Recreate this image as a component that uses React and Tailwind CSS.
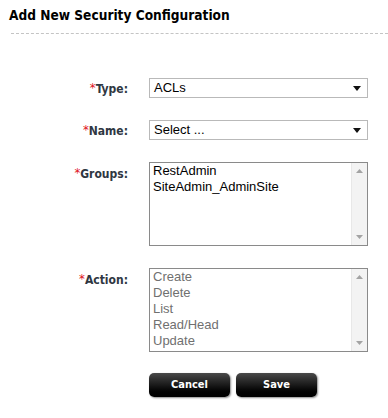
import React from 'react'

// Formulaire de configuration de sécurité
const GROUPS = ['RestAdmin', 'SiteAdmin_AdminSite']
const ACTIONS = ['Create', 'Delete', 'List', 'Read/Head', 'Update']

const Label = ({ children, top = false }) => (
  <div
    className={`w-[129px] shrink-0 text-right font-bold text-[12px] text-[#2f3742] pr-[1px] ${
      top ? 'pt-[1px]' : ''
    }`}
    style={{ fontFamily: 'Verdana, "DejaVu Sans Condensed", "DejaVu Sans", sans-serif' }}
  >
    <span className="text-[#e0101a] font-normal text-[13px] align-[1px]">*</span>
    {children}
  </div>
)

const FakeSelect = ({ value }) => (
  <div className="ml-[20px] w-[219px] h-[20px] border border-[#b9b9b9] bg-white flex items-center justify-between pl-[4px] pr-[6px] text-[13px] text-black">
    <span>{value}</span>
    <svg width="8" height="5" viewBox="0 0 8 5">
      <path d="M0 0 H8 L4 5 Z" fill="#111" />
    </svg>
  </div>
)

const ListBox = ({ items, muted = false }) => (
  <div className="ml-[20px] w-[219px] h-[84px] border border-[#8a8a8a] bg-white flex">
    <div className={`flex-1 pl-[3px] leading-[16px] text-[13px] ${muted ? 'text-[#707070]' : 'text-black'}`}>
      {items.map((it) => (
        <div key={it}>{it}</div>
      ))}
    </div>
    <div className="w-[16px] bg-[#f3f3f3] border-l border-[#e8e8e8] flex flex-col justify-between items-center py-[6px]">
      <svg width="7" height="4" viewBox="0 0 7 4">
        <path d="M0 4 H7 L3.5 0 Z" fill="#a3a3a3" />
      </svg>
      <svg width="7" height="4" viewBox="0 0 7 4">
        <path d="M0 0 H7 L3.5 4 Z" fill="#a3a3a3" />
      </svg>
    </div>
  </div>
)

const DarkButton = ({ children }) => (
  <button className="w-[81px] h-[24px] rounded-[5px] bg-gradient-to-b from-[#4a4a4a] via-[#1a1a1a] to-[#000] text-white font-bold text-[11px] shadow-[1px_1px_2px_rgba(0,0,0,0.45)]"
    style={{ fontFamily: 'Verdana, "DejaVu Sans Condensed", "DejaVu Sans", sans-serif' }}
  >
    {children}
  </button>
)

export default function App() {
  return (
    <div
      className="w-[388px] h-[418px] bg-white overflow-hidden"
      style={{ fontFamily: 'Arial, "Liberation Sans", sans-serif' }}
    >
      {/* Header */}
      <div className="pl-[9px] pt-[6px]">
        <h2
          className="font-bold text-[13.6px] text-black leading-[18px]"
          style={{ fontFamily: 'Tahoma, "DejaVu Sans Condensed", "DejaVu Sans", sans-serif' }}
        >
          Add New Security Configuration
        </h2>
      </div>
      <div className="ml-[11px] mt-[9px] border-t border-dashed border-[#c4c4c4]" />

      {/* Form */}
      <div className="mt-[44px] flex flex-col">
        <div className="flex items-center">
          <Label>Type:</Label>
          <FakeSelect value="ACLs" />
        </div>
        <div className="flex items-center mt-[22px]">
          <Label>Name:</Label>
          <FakeSelect value="Select ..." />
        </div>
        <div className="flex items-start mt-[22px]">
          <Label top>Groups:</Label>
          <ListBox items={GROUPS} />
        </div>
        <div className="flex items-start mt-[22px]">
          <Label top>Action:</Label>
          <ListBox items={ACTIONS} muted />
        </div>
        <div className="flex gap-[6px] ml-[149px] mt-[21px]">
          <DarkButton>Cancel</DarkButton>
          <DarkButton>Save</DarkButton>
        </div>
      </div>
    </div>
  )
}
